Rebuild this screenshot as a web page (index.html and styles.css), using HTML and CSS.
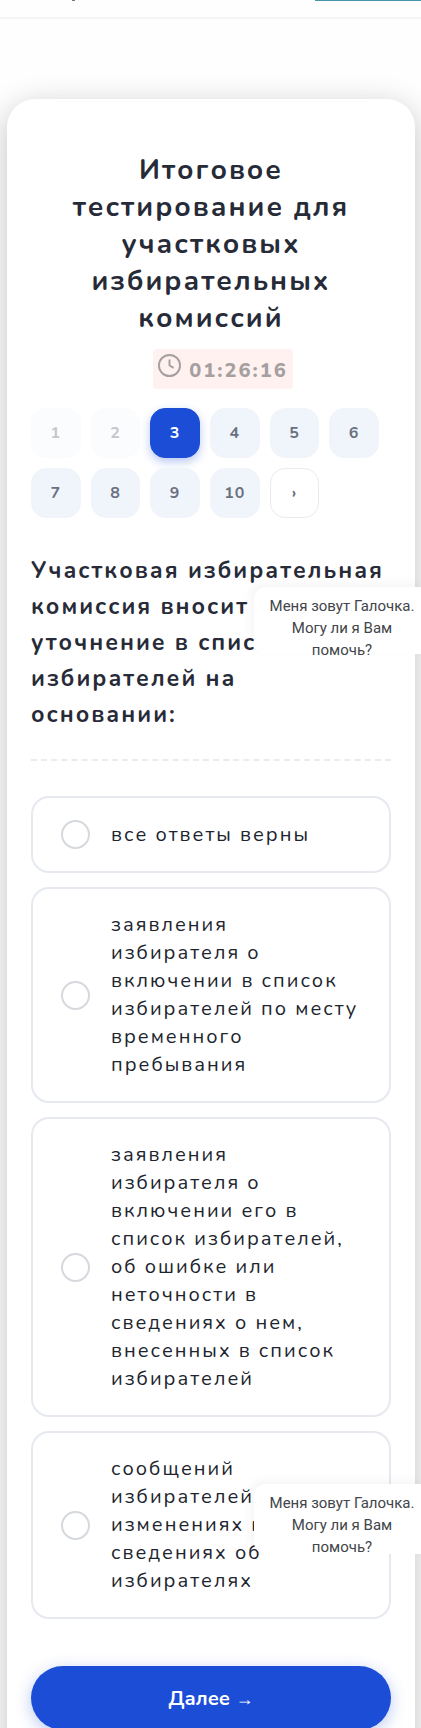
FILE: index.html
```html
<!DOCTYPE html>
<html lang="ru">
<head>
<meta charset="utf-8">
<meta name="viewport" content="width=device-width, initial-scale=1">
<title>Итоговое тестирование</title>
<link rel="stylesheet" href="styles.css">
</head>
<body>
<div class="page">
  <header class="topbar"><span class="topbar-mark"></span><span class="topbar-action"></span></header>
  <main class="card">
    <h1 class="title">Итоговое тестирование для участковых избирательных комиссий</h1>
    <div class="timer-row">
      <div class="timer">
        <svg class="timer-icon" viewBox="0 0 24 24" aria-hidden="true"><circle cx="12" cy="12" r="11"/><path d="M12 6.500v5.500l3.500 2"/></svg>
        <span class="timer-value">01:26:16</span>
      </div>
    </div>
    <nav class="steps" aria-label="Вопросы">
      <button class="step step-done" type="button" disabled>1</button>
      <button class="step step-done" type="button" disabled>2</button>
      <button class="step step-current" type="button" aria-current="step">3</button>
      <button class="step" type="button">4</button>
      <button class="step" type="button">5</button>
      <button class="step" type="button">6</button>
      <button class="step" type="button">7</button>
      <button class="step" type="button">8</button>
      <button class="step" type="button">9</button>
      <button class="step" type="button">10</button>
      <button class="step step-next" type="button">›</button>
    </nav>
    <div class="question">
      <h2 class="question-text" id="question">Участковая избирательная комиссия вносит уточнение в список избирателей на основании:</h2>
      <p class="hint hint-question">Меня зовут Галочка. Могу ли я Вам помочь?</p>
    </div>
    <form class="answers" aria-labelledby="question">
      <label class="answer"><input class="radio" type="radio" name="answer"><span>все ответы верны</span></label>
      <label class="answer"><input class="radio" type="radio" name="answer"><span>заявления избирателя о включении в список избирателей по месту временного пребывания</span></label>
      <label class="answer"><input class="radio" type="radio" name="answer"><span>заявления избирателя о включении его в список избирателей, об ошибке или неточности в сведениях о нем, внесенных в список избирателей</span></label>
      <div class="answer-wrap">
        <label class="answer"><input class="radio" type="radio" name="answer"><span>сообщений избирателей об изменениях в сведениях об избирателях</span></label>
        <p class="hint hint-answer">Меня зовут Галочка. Могу ли я Вам помочь?</p>
      </div>
      <button class="submit" type="button">Далее <span class="submit-arrow">→</span></button>
    </form>
  </main>
</div>
</body>
</html>
```
FILE: styles.css
```css
* { box-sizing: border-box; }
body { margin: 0; background: #fefefe; color: #272b38; font-family: Nunito, Lato, "Open Sans", sans-serif; }
.page { height: 100vh; overflow: hidden; }
.topbar { display: flex; justify-content: space-between; height: 19px; padding-left: 72px; border-bottom: 2px solid #f5f5f6; }
.topbar-mark { width: 3px; height: 1px; background: #777; }
.topbar-action { width: 106px; height: 1px; background: #4795ad; }
.card { margin: 80px 6px 0 7px; padding: 53px 24px 40px; border-radius: 28px; background: #fff; box-shadow: 0 8px 32px rgba(0, 0, 0, .24); }
.title { margin: 0 0 12px; padding: 0 24px; font-size: 28px; line-height: 37px; font-weight: 700; letter-spacing: 2px; text-align: center; }
.timer-row { display: flex; justify-content: center; margin-bottom: 19px; padding-left: 24px; }
.timer { display: flex; height: 40px; padding: 5px; gap: 8px; border-radius: 4px; background: #fff1f0; color: #a59f9f; }
.timer-icon { width: 23px; height: 23px; fill: none; stroke: currentColor; stroke-width: 2; stroke-linecap: round; stroke-linejoin: round; }
.timer-value { font-size: 20px; line-height: 34px; font-weight: 800; letter-spacing: 2px; }
.steps { display: grid; grid-template-columns: repeat(6, 1fr); gap: 10px; padding-right: 12px; }
.step { height: 50px; padding: 0; border: 1px solid #f1f5f9; border-radius: 15px; background: #f0f4fb; color: #6b7080; font-family: inherit; font-size: 16px; font-weight: 700; letter-spacing: 1px; }
.step-done { border-color: #fafcfd; background: #fafcfe; color: #c4c6ca; }
.step-current { border-color: #1c4dd7; background: #1c4dd7; color: #fff; box-shadow: 0 4px 10px rgba(28, 77, 215, .3); }
.step-next { border-color: #e9ebef; background: #fff; }
.question { position: relative; margin: 35px 0; padding-bottom: 26px; border-bottom: 2px dashed #e9ecef; }
.question-text { margin: 0; padding-right: 4px; font-size: 23px; line-height: 36px; font-weight: 700; letter-spacing: 2px; }
.hint { position: absolute; right: -39px; width: 176px; margin: 0; padding: 8px 12px 0; height: 67px; border-radius: 12px 12px 0 12px; background: #fff; box-shadow: -4px -4px 10px rgba(0, 0, 0, .04); color: #42454a; font: 15px/22px Roboto, sans-serif; text-align: center; }
.hint-question { top: 34px; }
.hint-answer { top: 53px; height: 70px; }
.answers { display: flex; flex-direction: column; gap: 14px; }
.answer-wrap { position: relative; }
.answer { display: flex; align-items: center; gap: 21px; padding: 22px 28px; border: 2px solid #e6e9f0; border-radius: 18px; background: #fff; color: #20242e; font-size: 20px; line-height: 28px; font-weight: 400; letter-spacing: 2px; }
.radio { flex: none; width: 29px; height: 29px; margin: 0; appearance: none; border: 2px solid #d5d9dd; border-radius: 50%; background: #fff; }
.radio:checked { border: 8px solid #1c4dd7; }
.submit { height: 64px; margin-top: 33px; border: 0; border-radius: 32px; background: #1c4dd7; color: #fff; box-shadow: 0 4px 16px rgba(28, 77, 215, .3); font-family: inherit; font-size: 20px; font-weight: 700; }
.submit-arrow { font-family: "Liberation Sans", sans-serif; font-size: 18px; }
```
